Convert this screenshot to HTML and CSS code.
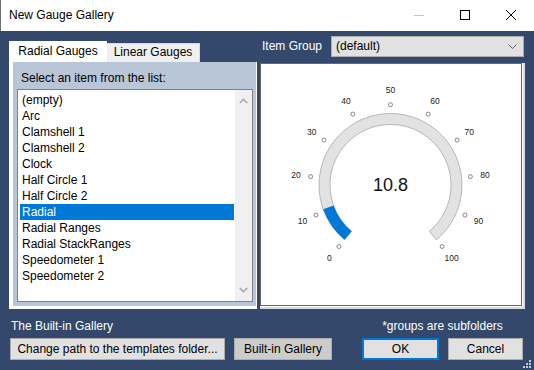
FILE: index.html
```html
<!DOCTYPE html>
<html lang="en">
<head>
    <meta charset="UTF-8">
    <meta name="viewport" content="width=device-width, initial-scale=1.0">
    <title>New Gauge Gallery</title>
    <link rel="stylesheet" href="styles.css">
</head>
<body>
    <div class="window">
        <div class="titlebar">
            <span class="title">New Gauge Gallery</span>
            <div class="caption-buttons">
                <span class="cap-btn">
                    <svg width="10" height="10" viewBox="0 0 10 10"><path d="M0 5.5H10" stroke="#c6c6c6" stroke-width="1"/></svg>
                </span>
                <span class="cap-btn">
                    <svg width="10" height="10" viewBox="0 0 10 10"><rect x="0.5" y="0.5" width="9" height="9" fill="none" stroke="#000" stroke-width="1"/></svg>
                </span>
                <span class="cap-btn">
                    <svg width="10" height="10" viewBox="0 0 10 10"><path d="M0 0L10 10M10 0L0 10" stroke="#000" stroke-width="1"/></svg>
                </span>
            </div>
        </div>

        <div class="client">
            <div class="top-row">
                <div class="tabs">
                    <div class="tab active">Radial Gauges</div>
                    <div class="tab">Linear Gauges</div>
                </div>
                <div class="group-picker">
                    <span class="group-label">Item Group</span>
                    <div class="combo">
                        <span>(default)</span>
                        <svg width="9" height="5" viewBox="0 0 9 5"><path d="M0.5 0.5L4.5 4.5L8.5 0.5" fill="none" stroke="#606060" stroke-width="1"/></svg>
                    </div>
                </div>
            </div>

            <div class="main-row">
                <div class="tab-page">
                    <div class="list-panel">
                        <div class="list-label">Select an item from the list:</div>
                        <div class="listbox">
                            <ul class="items">
                                <li>(empty)</li>
                                <li>Arc</li>
                                <li>Clamshell 1</li>
                                <li>Clamshell 2</li>
                                <li>Clock</li>
                                <li>Half Circle 1</li>
                                <li>Half Circle 2</li>
                                <li class="selected">Radial</li>
                                <li>Radial Ranges</li>
                                <li>Radial StackRanges</li>
                                <li>Speedometer 1</li>
                                <li>Speedometer 2</li>
                            </ul>
                            <div class="scrollbar">
                                <span class="arrow">
                                    <svg width="9" height="6" viewBox="0 0 9 6"><path d="M0.8 5L4.5 1.3L8.2 5" fill="none" stroke="#a6a6a6" stroke-width="1.6"/></svg>
                                </span>
                                <span class="arrow">
                                    <svg width="9" height="6" viewBox="0 0 9 6"><path d="M0.8 1L4.5 4.7L8.2 1" fill="none" stroke="#a6a6a6" stroke-width="1.6"/></svg>
                                </span>
                            </div>
                        </div>
                    </div>
                </div>

                <div class="preview-frame">
                    <div class="preview">
                        <svg class="gauge" width="260" height="241" viewBox="0 0 260 241">
                            <g transform="translate(-261 -64)">
                                <path d="M344.54 239.77 A71.5 71.5 0 1 1 436.46 239.77 L429.39 231.34 A60.5 60.5 0 1 0 351.61 231.34 Z" fill="#e2e2e2" stroke="#a8a8a8" stroke-width="0.8"/>
                                <path d="M344.54 239.77 A71.5 71.5 0 0 1 323.21 209.17 L333.56 205.46 A60.5 60.5 0 0 0 351.61 231.34 Z" fill="#0078d7"/>

                                <g fill="#fff" stroke="#6a6a6a" stroke-width="0.8">
                                    <circle cx="338.88" cy="246.51" r="2"/>
                                    <circle cx="316.05" cy="215.08" r="2"/>
                                    <circle cx="310.64" cy="176.61" r="2"/>
                                    <circle cx="323.93" cy="140.10" r="2"/>
                                    <circle cx="352.80" cy="114.10" r="2"/>
                                    <circle cx="390.50" cy="104.70" r="2"/>
                                    <circle cx="428.20" cy="114.10" r="2"/>
                                    <circle cx="457.07" cy="140.10" r="2"/>
                                    <circle cx="470.36" cy="176.61" r="2"/>
                                    <circle cx="464.95" cy="215.08" r="2"/>
                                    <circle cx="442.12" cy="246.51" r="2"/>
                                </g>

                                <g class="tick-labels">
                                    <text x="329.4" y="257.8">0</text>
                                    <text x="302.4" y="220.6">10</text>
                                    <text x="296.0" y="175.1">20</text>
                                    <text x="311.7" y="131.9">30</text>
                                    <text x="345.9" y="101.1">40</text>
                                    <text x="390.5" y="90.0">50</text>
                                    <text x="435.1" y="101.1">60</text>
                                    <text x="469.3" y="131.9">70</text>
                                    <text x="485.0" y="175.1">80</text>
                                    <text x="478.6" y="220.6">90</text>
                                    <text x="451.6" y="257.8">100</text>
                                </g>

                                <text class="gauge-value" x="390.5" y="185">10.8</text>
                            </g>
                        </svg>
                    </div>
                </div>
            </div>

            <div class="footer">
                <div class="footer-left">
                    <div class="note">The Built-in Gallery</div>
                    <div class="btn-row">
                        <button class="btn btn-path">Change path to the templates folder...</button>
                        <button class="btn btn-builtin">Built-in Gallery</button>
                    </div>
                </div>
                <div class="footer-right">
                    <div class="note centered">*groups are subfolders</div>
                    <div class="btn-row">
                        <button class="btn btn-ok">OK</button>
                        <button class="btn btn-cancel">Cancel</button>
                    </div>
                </div>
            </div>

            <svg class="grip" width="8" height="8" viewBox="0 0 8 8">
                <g fill="#c8ccd4">
                    <rect x="6" y="0" width="2" height="2"/>
                    <rect x="3" y="3" width="2" height="2"/>
                    <rect x="6" y="3" width="2" height="2"/>
                    <rect x="0" y="6" width="2" height="2"/>
                    <rect x="3" y="6" width="2" height="2"/>
                    <rect x="6" y="6" width="2" height="2"/>
                </g>
            </svg>
        </div>
    </div>
</body>
</html>
```

FILE: styles.css
```css
/* General Styles */
* {
    box-sizing: border-box;
}
body {
    margin: 0;
    padding: 0;
    font-family: "Liberation Sans", Arial, sans-serif;
    font-size: 12px;
    color: #000;
    background-color: #33486a;
}
.window {
    width: 534px;
    height: 370px;
    overflow: hidden;
}

/* Title bar */
.titlebar {
    height: 31px;
    display: flex;
    align-items: center;
    background-color: #fff;
    border-left: 1px solid #707070;
}
.title {
    padding-left: 8px;
    padding-bottom: 1px;
}
.caption-buttons {
    margin-left: auto;
    display: flex;
}
.cap-btn {
    width: 46px;
    height: 31px;
    display: flex;
    justify-content: center;
    align-items: center;
    padding-bottom: 1px;
}

/* Client area */
.client {
    position: relative;
    height: 339px;
    padding: 5px 9px 0 9px;
    background-color: #33486a;
}
.top-row {
    height: 26px;
    display: flex;
    justify-content: space-between;
}
.tabs {
    display: flex;
    align-items: flex-end;
}
.tab {
    width: 93px;
    height: 19px;
    line-height: 17px;
    text-align: center;
    background-color: #f0f0f0;
    border: 1px solid #d9d9d9;
    border-bottom: none;
    border-left: none;
}
.tab.active {
    width: 98px;
    height: 21px;
    line-height: 20px;
    background-color: #fff;
    border: none;
}
.group-picker {
    height: 21px;
    display: flex;
    align-items: center;
    gap: 9px;
    margin-right: 1px;
}
.group-label {
    color: #fff;
    padding-bottom: 1px;
}
.combo {
    width: 193px;
    height: 21px;
    display: flex;
    align-items: center;
    justify-content: space-between;
    padding: 0 6px 1px 4px;
    background-color: #e1e1e1;
    border: 1px solid #adadad;
}

/* Main row */
.main-row {
    height: 247px;
    display: flex;
}
.tab-page {
    width: 248px;
    height: 247px;
    padding: 0 1px 3px 4px;
    background-color: #fff;
}
.list-panel {
    height: 100%;
    display: flex;
    flex-direction: column;
    padding: 9px 3px 4px 4px;
    background-color: #b9c6d8;
}
.list-label {
    line-height: 14px;
    margin: 0 0 4px 4px;
}
.listbox {
    flex: 1;
    display: flex;
    background-color: #fff;
    border: 1px solid #828282;
}
.items {
    flex: 1;
    list-style: none;
    margin: 0;
    padding: 2px 1px 0 2px;
}
.items li {
    height: 16px;
    line-height: 16px;
    padding-left: 2px;
    white-space: nowrap;
}
.items li.selected {
    background-color: #0078d7;
    color: #fff;
}
.scrollbar {
    width: 17px;
    display: flex;
    flex-direction: column;
    justify-content: space-between;
    background-color: #f0f0f0;
}
.arrow {
    height: 22px;
    display: flex;
    justify-content: center;
    align-items: center;
}

/* Preview */
.preview-frame {
    margin: 1px 0 0 3px;
    padding: 0 1px 1px 0;
    background-color: #fff;
    border-right: 2px solid #dcdcdc;
    border-bottom: 2px solid #dcdcdc;
}
.preview {
    width: 262px;
    height: 243px;
    background-color: #fff;
    border: 1px solid #696969;
}
.gauge {
    display: block;
}
.tick-labels text {
    font-family: "Liberation Sans", Arial, sans-serif;
    font-size: 8.5px;
    fill: #222;
    text-anchor: middle;
    dominant-baseline: central;
}
.gauge-value {
    font-family: "Liberation Sans", Arial, sans-serif;
    font-size: 18px;
    fill: #111;
    text-anchor: middle;
    dominant-baseline: central;
}

/* Footer */
.footer {
    display: flex;
    justify-content: space-between;
    padding: 10px 2px 0 1px;
}
.note {
    color: #fff;
    line-height: 14px;
    margin: 0 0 5px 1px;
    white-space: nowrap;
}
.note.centered {
    text-align: center;
    margin-left: 0;
}
.footer-right {
    width: 161px;
}
.btn-row {
    display: flex;
    gap: 9px;
}
.btn {
    height: 22px;
    padding: 0 0 1px 0;
    font-family: "Liberation Sans", Arial, sans-serif;
    font-size: 12px;
    color: #000;
    background-color: #e1e1e1;
    border: 1px solid #adadad;
}
.btn-path {
    width: 215px;
}
.btn-builtin {
    width: 98px;
    background-color: #cccccc;
}
.btn-ok {
    width: 77px;
    border: 2px solid #0078d7;
}
.btn-cancel {
    width: 75px;
}
.grip {
    position: absolute;
    right: 3px;
    bottom: 2px;
}
```
